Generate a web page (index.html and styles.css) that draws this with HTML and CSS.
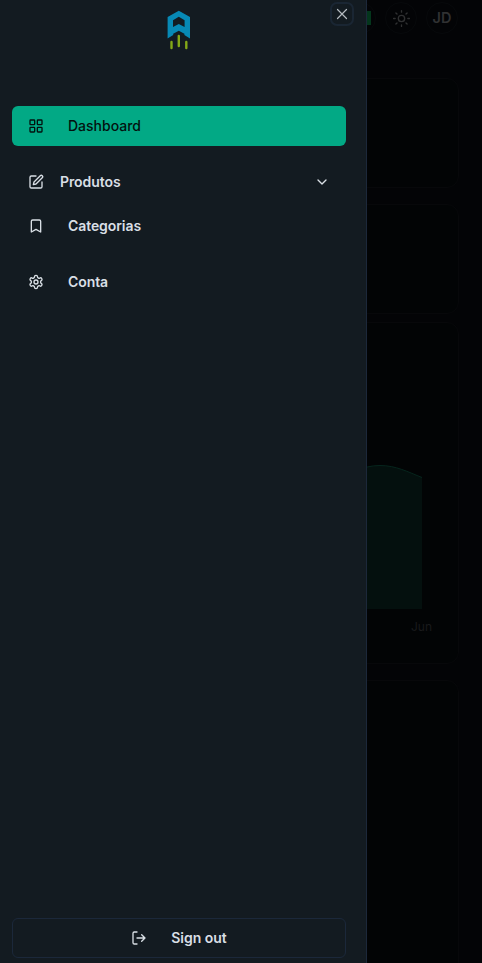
FILE: index.html
```html
<!DOCTYPE html>
<html lang="pt">
<head>
<meta charset="utf-8">
<title>Dashboard</title>
<link rel="stylesheet" href="styles.css">
</head>
<body>
<div class="page">
  <header class="topbar">
    <div class="round"><span class="flag"></span></div>
    <div class="round">
      <svg class="sun" viewBox="0 0 24 24"><circle cx="12" cy="12" r="4"/><path d="M12 2v2M12 20v2M4.93 4.93l1.41 1.41M17.66 17.66l1.41 1.41M2 12h2M20 12h2M6.34 17.66l-1.41 1.41M19.07 4.93l-1.41 1.41"/></svg>
    </div>
    <div class="round initials">JD</div>
  </header>
  <main class="cards">
    <section class="card stat"></section>
    <section class="card stat second"></section>
    <section class="card chart">
      <svg class="plot" viewBox="0 0 400 151">
        <path class="area" d="M300 30C325 16 340 7.5 358 7.5C374 7.5 386 14 400 19.5V151H300Z"/>
        <path class="line" d="M300 30C325 16 340 7.5 358 7.5C374 7.5 386 14 400 19.5"/>
      </svg>
      <div class="month">Jun</div>
    </section>
    <section class="card last"></section>
  </main>
</div>
<aside class="drawer">
  <svg class="logo" viewBox="0 0 24 40">
    <path class="roof" fill-rule="evenodd" d="M11.8 .8 23 7V28.5L17.4 25V23.8L11.8 20.8 6.2 23.8V25L.6 28.5V7ZM11.8 6.8 6 10.2V17L11.8 14 17.6 17V10.2Z"/>
    <path class="bars" d="M4.5 32v6M11.8 26v10M19.3 32v6"/>
  </svg>
  <button class="close" aria-label="Close"><svg viewBox="0 0 16 16"><path d="M3.5 3.5l9 9M12.5 3.5l-9 9"/></svg></button>
  <nav class="menu">
    <a class="item active"><svg viewBox="0 0 24 24"><rect x="3" y="3" width="7" height="7" rx="1"/><rect x="14" y="3" width="7" height="7" rx="1"/><rect x="14" y="14" width="7" height="7" rx="1"/><rect x="3" y="14" width="7" height="7" rx="1"/></svg><span>Dashboard</span></a>
    <a class="item group"><svg viewBox="0 0 24 24"><path d="M12 3H5a2 2 0 0 0-2 2v14a2 2 0 0 0 2 2h14a2 2 0 0 0 2-2v-7"/><path d="M18.375 2.625a2.12 2.12 0 0 1 3 3L12 15l-4 1 1-4Z"/></svg><span>Produtos</span><svg class="chevron" viewBox="0 0 24 24"><path d="m6 9 6 6 6-6"/></svg></a>
    <a class="item"><svg viewBox="0 0 24 24"><path d="m19 21-7-4-7 4V5a2 2 0 0 1 2-2h10a2 2 0 0 1 2 2v16z"/></svg><span>Categorias</span></a>
    <a class="item account"><svg viewBox="0 0 24 24"><path d="M12.22 2h-.44a2 2 0 0 0-2 2v.18a2 2 0 0 1-1 1.73l-.43.25a2 2 0 0 1-2 0l-.15-.08a2 2 0 0 0-2.73.73l-.22.38a2 2 0 0 0 .73 2.73l.15.1a2 2 0 0 1 1 1.72v.51a2 2 0 0 1-1 1.74l-.15.09a2 2 0 0 0-.73 2.73l.22.38a2 2 0 0 0 2.73.73l.15-.08a2 2 0 0 1 2 0l.43.25a2 2 0 0 1 1 1.73V20a2 2 0 0 0 2 2h.44a2 2 0 0 0 2-2v-.18a2 2 0 0 1 1-1.73l.43-.25a2 2 0 0 1 2 0l.15.08a2 2 0 0 0 2.73-.73l.22-.39a2 2 0 0 0-.73-2.73l-.15-.08a2 2 0 0 1-1-1.74v-.5a2 2 0 0 1 1-1.74l.15-.09a2 2 0 0 0 .73-2.73l-.22-.38a2 2 0 0 0-2.73-.73l-.15.08a2 2 0 0 1-2 0l-.43-.25a2 2 0 0 1-1-1.73V4a2 2 0 0 0-2-2z"/><circle cx="12" cy="12" r="3"/></svg><span>Conta</span></a>
  </nav>
  <button class="signout"><svg viewBox="0 0 24 24"><path d="M9 21H5a2 2 0 0 1-2-2V5a2 2 0 0 1 2-2h4M16 17l5-5-5-5M21 12H9"/></svg><span>Sign out</span></button>
</aside>
</body>
</html>
```
FILE: styles.css
```css
* { box-sizing: border-box; }
body {
  margin: 0;
  height: 963px;
  overflow: hidden;
  background: #030406;
  color: #d9dfe5;
  font-family: Inter, sans-serif;
  font-size: 14px;
  line-height: 20px;
}
svg {
  display: block;
  fill: none;
  stroke: currentColor;
  stroke-width: 2;
  stroke-linecap: round;
  stroke-linejoin: round;
}
.page { height: 963px; overflow: hidden; }
.topbar {
  display: flex;
  justify-content: flex-end;
  gap: 9px;
  height: 58px;
  padding: 2px 24px 0 0;
}
.round {
  display: flex;
  align-items: center;
  justify-content: center;
  width: 32px;
  height: 32px;
  border: 1px solid #07090b;
  border-radius: 50%;
  color: #303132;
}
.flag { width: 21px; height: 14px; background: #04361c; }
.sun { width: 19px; height: 19px; stroke-width: 1.7; }
.initials { font-size: 14.5px; font-weight: 600; }
.cards { padding: 20px 23px 0; }
.card {
  border: 1px solid #07080a;
  border-radius: 12px;
  background: #020405;
}
.stat { height: 110px; }
.second { margin-top: 16px; }
.chart { height: 342px; margin-top: 8px; padding: 135px 37px 0 0; }
.plot { width: 400px; height: 151px; margin-left: -2px; }
.area { fill: #04100e; stroke: none; }
.line { stroke: #06251d; stroke-width: 1; }
.month {
  margin: 8px -11px 0 0;
  text-align: right;
  color: #191a1c;
  font-size: 12px;
}
.last { height: 400px; margin-top: 16px; }
.drawer {
  position: absolute;
  top: 0;
  left: 0;
  display: flex;
  flex-direction: column;
  width: 367px;
  height: 963px;
  padding: 10px 20px 5px 12px;
  border-right: 1px solid #1c283a;
  background: #131b21;
}
.logo { align-self: center; width: 24px; height: 40px; }
.roof { fill: #0789b5; stroke: none; }
.bars { stroke: #83a817; stroke-width: 2.4; }
.close {
  position: absolute;
  top: 2px;
  right: 12px;
  display: grid;
  place-items: center;
  width: 24px;
  height: 24px;
  padding: 0;
  border: 2px solid #1a2633;
  border-radius: 7px;
  background: transparent;
  color: #b5bbc1;
}
.close svg { width: 16px; height: 16px; stroke-width: 1.2; }
.menu { flex: 1; margin-top: 56px; }
.item {
  display: flex;
  align-items: center;
  gap: 24px;
  height: 40px;
  padding: 0 16px;
  margin-bottom: 4px;
  border-radius: 6px;
  font-weight: 600;
  letter-spacing: -0.08px;
}
.item svg, .signout svg { width: 16px; height: 16px; }
.active {
  margin-bottom: 16px;
  background: #02a985;
  color: #03120f;
  font-weight: 500;
  letter-spacing: 0;
}
.group { gap: 16px; }
.chevron { margin-left: auto; }
.account { margin-top: 16px; }
.signout {
  display: flex;
  align-items: center;
  justify-content: center;
  gap: 24px;
  height: 40px;
  padding: 0;
  border: 1px solid #1b283a;
  border-radius: 6px;
  background: transparent;
  color: #d9dfe5;
  font: 600 14px/20px Inter, sans-serif;
}
```
